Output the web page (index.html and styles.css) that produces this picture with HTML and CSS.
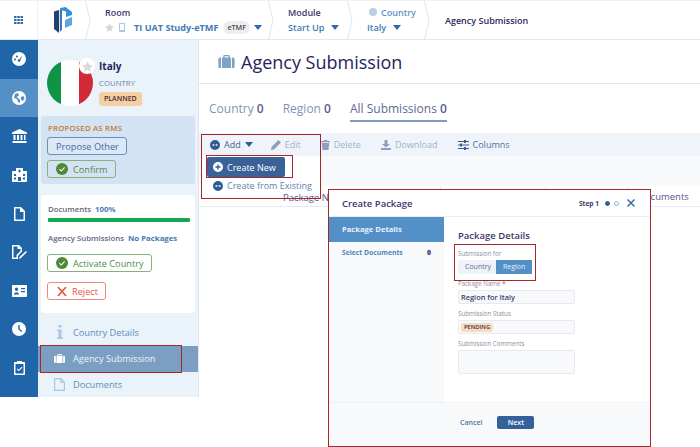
FILE: index.html
```html
<!DOCTYPE html>
<html>
<head>
<meta charset="utf-8">
<title>Agency Submission</title>
<link rel="stylesheet" href="styles.css">
</head>
<body>
<svg class="defs" width="0" height="0">
	<symbol id="i-case" viewBox="0 0 20 16"><path d="M6 3V1.500C6 .7 6.700 0 7.500 0h5c.8 0 1.500.7 1.500 1.500V3h-1.500V1.500h-5V3zM4.500 3h11v13h-11zM3.300 3v13H2c-1.100 0-2-.9-2-2V5c0-1.100.9-2 2-2zM16.700 3H18c1.100 0 2 .9 2 2v9c0 1.100-.9 2-2 2h-1.300z"/></symbol>
	<symbol id="i-plus" viewBox="0 0 12 12"><path fill-rule="evenodd" d="M6 0a6 6 0 1 1 0 12A6 6 0 0 1 6 0zM3 5.200v1.600h6V5.200z"/><path d="M5.200 3h1.600v6H5.200z" class="plus-v"/></symbol>
	<symbol id="i-check" viewBox="0 0 14 14"><circle cx="7" cy="7" r="7" fill="#4c8a35"/><path d="M4 7.200l2.200 2.200L10 5.200" fill="none" stroke="#fff" stroke-width="1.300"/></symbol>
	<symbol id="i-caret" viewBox="0 0 10 6"><path d="M0 0h10L5 6z"/></symbol>
	<symbol id="i-star" viewBox="0 0 20 19"><path d="M10 0l3 6.400 7 .9-5.100 4.800 1.300 6.900L10 15.600 3.800 19l1.300-6.900L0 7.300l7-.9z"/></symbol>
	<symbol id="i-chev" viewBox="0 0 6 39"><path d="M.5 0L5 19.500.5 39" fill="none" stroke="#dce7f3"/></symbol>
</svg>

<div class="app">
	<header class="topbar">
		<div class="cell cell-grid">
			<svg width="9" height="8" viewBox="0 0 9 8" fill="#2e69a8"><path d="M0 0h2.500v2H0zM3.250 0h2.500v2h-2.500zM6.500 0H9v2H6.500zM0 3h2.500v2H0zM3.250 3h2.500v2h-2.500zM6.500 3H9v2H6.500zM0 6h2.500v2H0zM3.250 6h2.500v2h-2.500zM6.500 6H9v2H6.500z"/></svg>
		</div>
		<div class="cell cell-logo">
			<svg width="18" height="26" viewBox="0 0 18 26"><path d="M0 4.500L5 3v23l-5-4z" fill="#23406f"/><path d="M5.800 3L8 2.300v20.400L5.800 25z" fill="#3b78b8"/><path d="M6 1l5.500-1L18 5v3l-6 2V4.500L6 3z" fill="#3b8fd6"/><path d="M11 13l7-3v8l-7 3z" fill="#5aa5e2"/></svg>
		</div>
		<svg class="chev" width="6" height="39"><use href="#i-chev"/></svg>
		<div class="crumb crumb-room">
			<div class="crumb-label">Room</div>
			<div class="crumb-value">
				<svg class="star-sm" width="9" height="9"><use href="#i-star"/></svg>
				<svg class="phone" width="6" height="9" viewBox="0 0 6 9"><path fill-rule="evenodd" d="M1 0h4c.6 0 1 .4 1 1v7c0 .6-.4 1-1 1H1c-.6 0-1-.4-1-1V1c0-.6.4-1 1-1zm0 1v6h4V1z"/></svg>
				<span class="room-name">TI UAT Study-eTMF</span>
				<span class="pill">eTMF</span>
				<svg class="caret" width="8" height="5"><use href="#i-caret"/></svg>
			</div>
		</div>
		<svg class="chev" width="6" height="39"><use href="#i-chev"/></svg>
		<div class="crumb crumb-module">
			<div class="crumb-label">Module</div>
			<div class="crumb-value">Start Up <svg class="caret" width="8" height="5"><use href="#i-caret"/></svg></div>
		</div>
		<svg class="chev" width="6" height="39"><use href="#i-chev"/></svg>
		<div class="crumb crumb-country">
			<div class="crumb-label crumb-label-blue"><span class="globe-dot"></span>Country</div>
			<div class="crumb-value">Italy <svg class="caret" width="8" height="5"><use href="#i-caret"/></svg></div>
		</div>
		<svg class="chev" width="6" height="39"><use href="#i-chev"/></svg>
		<div class="crumb-last">Agency Submission</div>
	</header>

	<div class="body">
		<nav class="rail">
			<div class="rail-item">
				<svg width="14" height="14" viewBox="0 0 14 14"><path fill="#fff" fill-rule="evenodd" d="M7 0a7 7 0 1 1 0 14A7 7 0 0 1 7 0zM3 6.500a1 1 0 1 0 0 2 1 1 0 0 0 0-2zm2-3a1 1 0 1 0 0 2 1 1 0 0 0 0-2zm5.500 0L7.300 7.200a1.300 1.300 0 1 0 1 .8z"/></svg>
			</div>
			<div class="rail-item rail-active">
				<svg width="14" height="14" viewBox="0 0 14 14"><path fill="#fff" fill-rule="evenodd" d="M7 0a7 7 0 1 1 0 14A7 7 0 0 1 7 0zM3 3L2 7l3 1 1 3 2 1V9L6 7 4.500 6 7 4.500 6 2zm6 3l-.5 2 2 2 2-2-1-3z"/></svg>
			</div>
			<div class="rail-item">
				<svg width="15" height="14" viewBox="0 0 15 14"><path fill="#fff" d="M7.500 0L15 3.500V5H0V3.500zM1.500 6h2v5h-2zM5 6h2v5H5zM8.500 6h2v5h-2zM12 6h1.500v5H12zM.5 12h14v2H.5z"/></svg>
			</div>
			<div class="rail-item">
				<svg width="15" height="14" viewBox="0 0 15 14"><path fill="#fff" fill-rule="evenodd" d="M4 0h7v3h3c.6 0 1 .4 1 1v9c0 .6-.4 1-1 1H1c-.6 0-1-.4-1-1V4c0-.6.4-1 1-1h3zM7 1.500v1H6v1h1v1h1v-1h1v-1H8v-1zM6 9v4h3V9zM2 6v2h2V6zm0 3.500v2h2v-2zM11 6v2h2V6zm0 3.500v2h2v-2z"/></svg>
			</div>
			<div class="rail-item">
				<svg width="11" height="14" viewBox="0 0 11 14"><path fill="#fff" fill-rule="evenodd" d="M1 0h6l4 4v9c0 .6-.4 1-1 1H1c-.6 0-1-.4-1-1V1c0-.6.4-1 1-1zm.5 1.500v11h8V5H6V1.500z"/></svg>
			</div>
			<div class="rail-item">
				<svg width="15" height="14" viewBox="0 0 15 14"><path fill="#fff" fill-rule="evenodd" d="M1 0h6l3 3v3.500L6 11v3H1c-.6 0-1-.4-1-1V1c0-.6.4-1 1-1zm.5 1.500v11h3V10L8.500 6V4H5.500V1.500zM14 6l1 1-6 6-2 1 .5-2z"/></svg>
			</div>
			<div class="rail-item">
				<svg width="15" height="12" viewBox="0 0 15 12"><path fill="#fff" fill-rule="evenodd" d="M1 0h13c.6 0 1 .4 1 1v10c0 .6-.4 1-1 1H1c-.6 0-1-.4-1-1V1c0-.6.4-1 1-1zm3.500 2.500a1.700 1.700 0 1 0 0 3.400 1.700 1.700 0 0 0 0-3.400zM2 9.500h5c0-3-5-3-5 0zM9 3v1.200h4V3zm0 3v1.200h4V6z"/></svg>
			</div>
			<div class="rail-item">
				<svg width="14" height="14" viewBox="0 0 14 14"><path fill="#fff" fill-rule="evenodd" d="M7 0a7 7 0 1 1 0 14A7 7 0 0 1 7 0zM6.300 3v4.500L9.500 10l.8-1-2.600-2V3z"/></svg>
			</div>
			<div class="rail-item">
				<svg width="11" height="14" viewBox="0 0 11 14"><path fill="#fff" fill-rule="evenodd" d="M3 0h5v1h2c.6 0 1 .4 1 1v11c0 .6-.4 1-1 1H1c-.6 0-1-.4-1-1V2c0-.6.400-1 1-1h2zM1.500 3v9.500h8V3zM3.500 7.500l-.8.800 2 2 3.800-3.800-.8-.8-3 3z"/></svg>
			</div>
		</nav>

		<aside class="panel">
			<div class="profile">
				<div class="flag">
					<span class="flag-star"><svg width="11" height="11"><use href="#i-star"/></svg></span>
				</div>
				<div class="profile-text">
					<div class="profile-name">Italy</div>
					<div class="profile-type">COUNTRY</div>
					<span class="tag">PLANNED</span>
				</div>
			</div>

			<div class="rms">
				<div class="rms-title">PROPOSED AS RMS</div>
				<button class="btn btn-blue">Propose Other</button>
				<button class="btn btn-green"><svg width="12" height="12"><use href="#i-check"/></svg>Confirm</button>
			</div>

			<div class="status">
				<div class="stat-line">Documents <b>100%</b></div>
				<div class="bar"></div>
				<div class="stat-line stat-gap">Agency Submissions <b>No Packages</b></div>
				<button class="btn btn-green"><svg width="12" height="12"><use href="#i-check"/></svg>Activate Country</button>
				<button class="btn btn-red"><svg width="10" height="9" viewBox="0 0 11 10"><path d="M1 0l9 10M10 0L1 10" stroke="#e5533f" stroke-width="1.800"/></svg>Reject</button>
			</div>

			<ul class="side-menu">
				<li>
					<span class="side-icon"><svg width="6" height="14" viewBox="0 0 6 14" fill="#a9c6e2"><path d="M1.500 0h3v2.500h-3zM0 4.500h4.500v8H6V14H0v-1.500h1.500V6H0z"/></svg></span>
					Country Details
				</li>
				<li class="side-active">
					<span class="side-icon"><svg width="14" height="11"><use href="#i-case"/></svg></span>
					Agency Submission
				</li>
				<li>
					<span class="side-icon"><svg width="11" height="13" viewBox="0 0 11 13"><path fill="none" stroke="#a9c6e2" stroke-width="1.200" d="M.6.600h6.200l3.600 3.600v8.200H.6zM6.800.6v3.600h3.600"/></svg></span>
					Documents
				</li>
			</ul>
		</aside>

		<main class="main">
			<div class="page-head">
				<svg class="page-icon" width="17" height="13"><use href="#i-case"/></svg>
				<h1>Agency Submission</h1>
			</div>
			<div class="tabs">
				<span class="tab">Country <b>0</b></span>
				<span class="tab">Region <b>0</b></span>
				<span class="tab tab-on">All Submissions <b>0</b></span>
			</div>
			<div class="toolbar">
				<span class="tool tool-add"><svg width="10" height="10"><use href="#i-plus"/></svg>Add<svg class="caret-dark" width="8" height="5"><use href="#i-caret"/></svg></span>
				<span class="tool"><svg width="10" height="10" viewBox="0 0 10 10"><path d="M7.500 0L10 2.500 3 9.500 0 10l.5-3z"/></svg>Edit</span>
				<span class="tool"><svg width="9" height="10" viewBox="0 0 9 10"><path d="M3 0h3l.5 1H9v1.200H0V1h2.500zM.8 3h7.400L7.500 10h-6z"/></svg>Delete</span>
				<span class="tool"><svg width="10" height="10" viewBox="0 0 10 10"><path d="M3.500 0h3v4H9L5 7.500 1 4h2.500zM0 8h10v2H0z"/></svg>Download</span>
				<span class="tool tool-dark"><svg width="11" height="10" viewBox="0 0 11 10"><path d="M0 1h6V0h2v1h3v1H8v1H6V2H0zM0 4.500h2v-1h2v1h7v1H4v1H2v-1H0zM0 8h6V7h2v1h3v1H8v1H6V9H0z"/></svg>Columns</span>
			</div>
			<div class="band"></div>
			<div class="grid-head">
				<span class="col col-name">Package Name</span>
				<span class="col col-b"></span>
				<span class="col col-c"></span>
				<span class="col col-docs">Documents</span>
			</div>
		</main>
	</div>
</div>

<div class="add-menu">
	<div class="add-new"><svg width="10" height="10"><use href="#i-plus"/></svg>Create New</div>
	<div class="add-existing"><svg width="10" height="10"><use href="#i-plus"/></svg>Create from Existing</div>
</div>

<div class="mark mark-add"></div>
<div class="mark mark-new"></div>
<div class="mark mark-side"></div>

<section class="modal">
	<div class="modal-head">
		<div class="modal-title">Create Package</div>
		<div class="modal-step">Step 1 <span class="dot dot-on"></span><span class="dot"></span></div>
		<svg class="modal-close" width="8" height="8" viewBox="0 0 8 8"><path d="M.5.5l7 7M7.500.5l-7 7" stroke="#3a6ea8" stroke-width="1.500"/></svg>
	</div>
	<div class="modal-body">
		<div class="modal-nav">
			<div class="nav-on">Package Details</div>
			<div class="nav-off"><span>Select Documents</span><b>0</b></div>
		</div>
		<div class="modal-form">
			<h2>Package Details</h2>
			<div class="field-sub">
				<label>Submission for</label>
				<div class="switch"><span>Country</span><span class="switch-on">Region</span></div>
			</div>
			<label>Package Name <em>*</em></label>
			<div class="input input-val">Region for Italy</div>
			<label>Submission Status</label>
			<div class="input"><span class="tag tag-pending">PENDING</span></div>
			<label>Submission Comments</label>
			<div class="input input-area"></div>
		</div>
	</div>
	<div class="modal-foot">
		<span class="cancel">Cancel</span>
		<span class="next">Next</span>
	</div>
	<div class="mark mark-sub"></div>
</section>
</body>
</html>
```

FILE: styles.css
```css
*{box-sizing: border-box;}
body{margin: 0;background: #fff;font-family: "Open Sans", "Noto Sans", sans-serif;color: #2b2a5c;overflow: hidden;}
.defs{position: absolute;}
.app{width: 700px;height: 397px;display: flex;flex-direction: column;}

/* top bar */
.topbar{height: 40px;display: flex;align-items: center;border-top: 1px solid #eef1f6;border-bottom: 1px solid #e3e8f0;flex: none;}
.cell{height: 100%;display: flex;align-items: center;justify-content: center;flex: none;}
.cell-grid{width: 38px;border-right: 1px solid #eaf0f7;}
.cell-logo{width: 47px;padding-left: 3px;}
.chev{flex: none;}
.crumb{height: 100%;display: flex;flex-direction: column;justify-content: center;gap: 1px;flex: none;}
.crumb-room{width: 177px;padding-left: 14px;}
.crumb-module{width: 73px;padding-left: 14px;}
.crumb-country{width: 71px;padding-left: 14px;}
.crumb-label{font-size: 9px;line-height: 13px;font-weight: 600;color: #3c3a6b;}
.crumb-label-blue{color: #5b94c6;padding-left: 2px;display: flex;align-items: center;}
.globe-dot{width: 8px;height: 8px;border-radius: 50%;background: #b9cfe3;margin-right: 4px;}
.crumb-value{display: flex;align-items: center;font-size: 9.200px;line-height: 15px;font-weight: 600;color: #3f7cb4;white-space: pre;}
.crumb-value .caret{margin-left: 4px;}
.caret{fill: #2e69a8;flex: none;}
.star-sm{fill: #d8d8d8;margin-right: 5px;}
.phone{fill: #a9c8e8;margin-right: 9px;}
.room-name{font-size: 9.100px;font-weight: 700;}
.pill{font-size: 7.200px;line-height: 13px;padding: 0 4px;margin-left: 5px;margin-right: 0;border-radius: 7px;background: #eeeeee;color: #4a4a5a;font-weight: 600;}
.crumb-last{font-size: 9px;font-weight: 600;color: #2b2a5c;padding-left: 15px;}

.body{flex: 1;display: flex;min-height: 0;}

/* left rail */
.rail{width: 38px;flex: none;background: #1f65a8;display: flex;flex-direction: column;}
.rail-item{height: 38.600px;display: flex;align-items: center;justify-content: center;}
.rail-active{background: #5490c6;}

/* country panel */
.panel{width: 161px;flex: none;background: #eaf2fa;border-right: 1px solid #dde6f0;padding-top: 20px;}
.profile{display: flex;padding-left: 9px;height: 48px;}
.flag{position: relative;width: 46px;height: 46px;border-radius: 50%;flex: none;background: linear-gradient(90deg, #0d9447 0, #0d9447 14px, #fff 14px, #fff 32px, #cf2a36 32px);}
.flag-star{position: absolute;top: -2px;right: -2px;width: 16px;height: 16px;border-radius: 50%;background: #fff;display: flex;align-items: center;justify-content: center;fill: #d9d9d9;}
.profile-text{margin-left: 6px;margin-top: -2px;}
.profile-name{font-size: 10px;line-height: 16px;font-weight: 700;color: #28265c;}
.profile-type{font-size: 7.800px;line-height: 12px;color: #6e86ad;margin-top: 3px;}
.tag{display: block;width: fit-content;font-size: 7px;line-height: 14px;font-weight: 600;padding: 0 5px;border-radius: 3px;background: #f4cfa2;color: #4a2c3e;margin-top: 3px;}
.rms{margin: 8px 3px 0 3px;height: 68px;background: #d3e3f4;border-radius: 3px;padding: 7px 6px;display: flex;flex-direction: column;align-items: flex-start;}
.rms-title{font-size: 7.800px;line-height: 10px;color: #c47a2c;font-weight: 600;letter-spacing: .2px;padding-left: 1px;}
.btn{display: inline-flex;align-items: center;gap: 5px;height: 18px;padding: 0 7px 0 8px;font-family: inherit;font-size: 9.200px;border-radius: 3px;background: transparent;flex: none;}
.btn-blue{border: 1px solid #6d8fbd;color: #456a9f;margin-top: 4px;background: #dbe8f6;}
.btn-green{border: 1px solid #86b27a;color: #4f8f3f;}
.rms .btn-green{margin-top: 5px;}
.btn-red{border: 1px solid #ee8a7d;color: #e5533f;padding: 0 7px 0 9px;margin-top: 10px;background: #fff;}
.status{margin: 11px 3px 0 3px;height: 118px;background: #fff;border-radius: 4px;padding: 7px 6px;display: flex;flex-direction: column;align-items: flex-start;}
.status .btn-green{margin-top: 9px;background: #fff;}
.stat-line{font-size: 7.800px;line-height: 14px;font-weight: 600;color: #5d6580;padding-left: 1px;}
.stat-line b{color: #3f7cb4;font-weight: 700;margin-left: 2px;}
.stat-gap{margin-top: 9px;}
.bar{width: 142px;height: 4px;background: #14a853;border-radius: 1px;margin: 2px 0 0 1px;}
.side-menu{list-style: none;margin: 7px 0 0 0;padding: 0;}
.side-menu li{height: 26px;padding-bottom: 1.500px;display: flex;align-items: center;font-size: 9.200px;color: #5d8fc0;}
.side-icon{width: 35px;padding-left: 16px;padding-right: 8px;display: flex;justify-content: center;flex: none;}
.side-active{background: #7a9fc2;color: #eef4fa !important;fill: #fff;}

/* main */
.main{flex: 1;min-width: 0;}
.page-head{height: 44px;padding-left: 19px;display: flex;align-items: center;border-bottom: 1px solid #e3e8f0;}
.page-icon{fill: #7fa3c4;margin-right: 6px;}
h1{margin: 0;font-size: 18px;font-weight: 400;color: #26245a;}
.tabs{height: 49px;display: flex;padding: 16px 0 0 10px;gap: 19px;}
.tab{height: 22px;font-size: 12px;line-height: 18px;color: #7f95b5;}
.tab b{font-weight: 600;color: #5a5d8c;}
.tab-on{color: #606a96;border-bottom: 2px solid #7a9cc2;}
.toolbar{height: 23px;background: #eff4fa;display: flex;align-items: center;padding-left: 11px;gap: 20px;}
.tool{display: inline-flex;align-items: center;gap: 4px;font-size: 9px;color: #9fb1c9;fill: #8ba0ba;}
.tool-add{color: #47648f;fill: #2f5c92;margin-right: -2px;}
.caret-dark{fill: #2f5c92;margin-left: 0;}
.tool-dark{color: #54709a;fill: #3a5c8c;}
.band{height: 30px;background: #f7f9fb;}
.grid-head{height: 21px;border-bottom: 1px solid #e6ebf2;display: flex;font-size: 9.500px;line-height: 12px;color: #56558a;}
.col{display: block;height: 20px;padding-top: 5px;white-space: nowrap;}
.col-name{width: 241px;padding-left: 84px;padding-top: 6px;}
.col-b{width: 105px;border-left: 1px solid #e9edf3;}
.col-c{width: 83px;border-left: 1px solid #e9edf3;}
.col-docs{flex: 1;border-left: 1px solid #e9edf3;padding-left: 9px;}

/* add dropdown */
.add-menu{position: absolute;left: 202px;top: 156px;width: 118px;height: 38px;background: #fff;padding: 0 5px;}
.add-new{width: 78px;height: 20px;margin-top: 1px;background: #3a6298;color: #fff;fill: #fff;font-size: 9px;display: flex;align-items: center;gap: 4px;padding-left: 6px;border-radius: 2px;}
.add-existing{height: 17px;color: #5f82b0;fill: #2f5c92;font-size: 9px;line-height: 11px;display: flex;align-items: center;gap: 4px;padding-left: 6px;white-space: nowrap;}
.plus-v{fill: #2f5c92;}
.add-new .plus-v{fill: #3a6298;}

/* red annotation boxes */
.mark{position: absolute;border: 1.500px solid #a5272c;pointer-events: none;}
.mark-add{left: 201px;top: 134px;width: 120px;height: 65px;}
.mark-new{left: 206px;top: 155px;width: 87px;height: 23px;}
.mark-side{left: 40px;top: 345px;width: 142px;height: 28px;}
.mark-sub{left: 125px;top: 54px;width: 82px;height: 37px;}

/* modal */
.modal{position: absolute;left: 328px;top: 189px;width: 323px;height: 258px;background: #fff;border: 1.500px solid #a5272c;display: flex;flex-direction: column;}
.modal-head{height: 27px;display: flex;align-items: center;padding: 0 15px 0 13px;border-bottom: 1px solid #e8eef5;flex: none;}
.modal-title{font-size: 9.500px;font-weight: 600;color: #3c3a6b;flex: 1;}
.modal-step{font-size: 6.600px;font-weight: 700;color: #3c3a6b;display: flex;align-items: center;margin-right: 8px;}
.dot{width: 5px;height: 5px;border-radius: 50%;border: 1px solid #93b3d3;margin-left: 4px;}
.dot-on{background: #2e5f98;border-color: #2e5f98;margin-left: 6px;}
.modal-body{flex: 1;display: flex;min-height: 0;}
.modal-nav{width: 115px;background: #f8f9fa;flex: none;}
.nav-on{height: 25px;background: #5390c8;color: #eaf2fa;font-size: 7.600px;font-weight: 700;line-height: 25px;padding-left: 13px;}
.nav-off{display: flex;justify-content: space-between;font-size: 6.800px;font-weight: 700;color: #4f86ba;padding: 0 13px 0 13px;margin-top: 5px;line-height: 12px;}
.nav-off b{color: #3c3a6b;}
.modal-form{flex: 1;padding: 12px 0 0 14px;}
h2{margin: 0;font-size: 9.500px;line-height: 14px;font-weight: 600;color: #3c3a6b;}
label{display: block;font-size: 6.200px;line-height: 9px;color: #8b8f9c;margin-top: 5px;}
label em{color: #c44;font-style: normal;}
.field-sub{margin-top: 4px;}
.field-sub label{margin-top: 6px;}
.switch{display: flex;width: 74px;height: 14px;margin-top: 2px;background: #eef3f9;font-size: 7px;line-height: 14px;color: #5b6a8c;border-radius: 2px;}
.switch span{padding: 0 0 0 7px;width: 38px;}
.switch span:last-child{width: 36px;}
.switch-on{background: #5390c8;color: #e6f0fa;}
.input{width: 117px;height: 14px;margin-top: 2px;background: #f8f9fa;border: 1px solid #e8eaee;border-radius: 2px;padding-left: 2px;display: flex;align-items: center;}
.input-val{font-size: 7.400px;font-weight: 600;color: #3c3a6b;}
.tag-pending{margin: 0;padding: 0 3px;line-height: 9px;font-size: 5.800px;background: #f6dcbf;}
.input-area{height: 24px;}
.modal-foot{height: 44px;flex: none;background: #f8f9fa;border-top: 1px solid #f0f1f3;display: flex;align-items: center;padding: 0 0 4px 131px;gap: 15px;font-size: 7px;font-weight: 600;}
.cancel{color: #4f78a8;}
.next{width: 37px;height: 13px;line-height: 13px;text-align: center;background: #34609a;color: #fff;border-radius: 2px;}
```
